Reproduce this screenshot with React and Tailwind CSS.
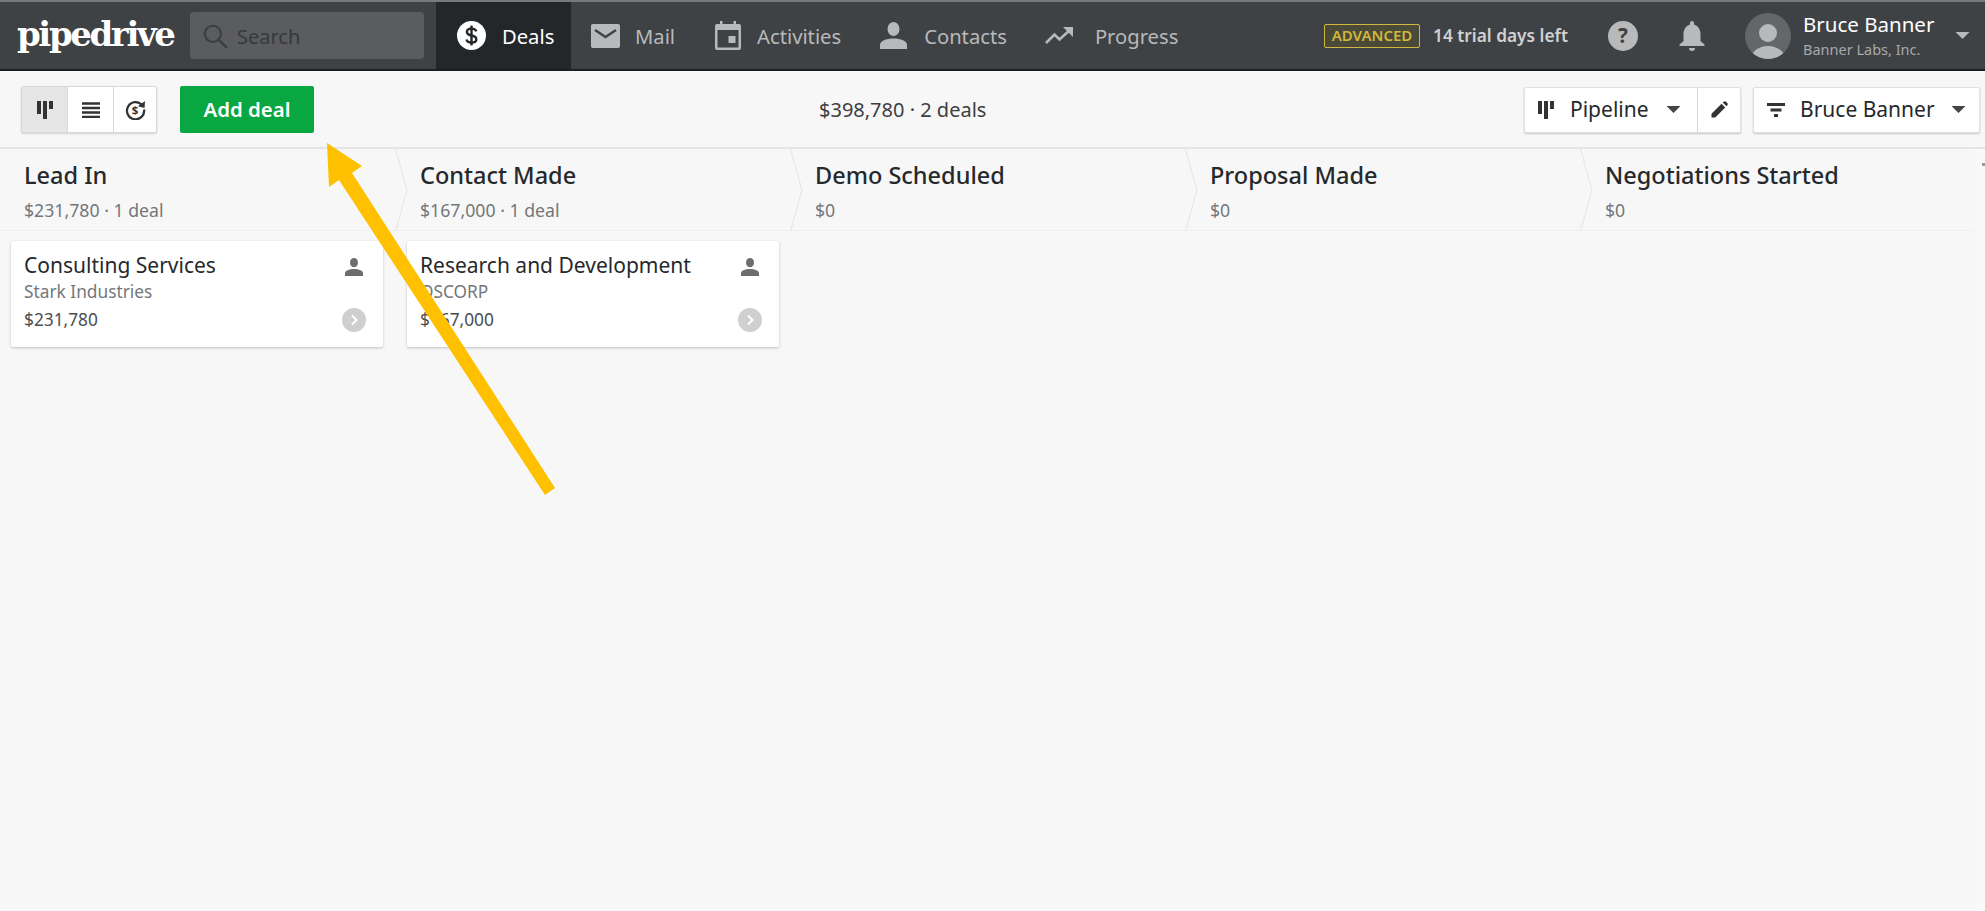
function DollarCircle({ className }) {
  return (
    <svg viewBox="0 0 24 24" className={className}>
      <circle cx="12" cy="12" r="12" fill="#fff" />
      <path d="M16 8.600c-.5-1.500-2-2.300-4-2.300-2.200 0-3.800 1.100-3.800 2.800 0 1.800 1.600 2.400 3.800 2.900 2.300.5 4 1.100 4 3 0 1.700-1.700 2.800-4 2.800-2.200 0-3.700-.9-4.200-2.500" fill="none" stroke="#23272a" strokeWidth="2" />
      <path d="M12 3.800v16.400" stroke="#23272a" strokeWidth="2" />
    </svg>
  );
}
function MailIcon({ className }) {
  return (
    <svg viewBox="0 0 29 24" className={className}>
      <rect width="29" height="24" rx="2" fill="#b8b9ba" />
      <path d="M4 6l10.500 7L25 6" fill="none" stroke="#3f4245" strokeWidth="2.400" />
    </svg>
  );
}
function CalendarIcon({ className }) {
  return (
    <svg viewBox="0 0 26 29" className={className}>
      <path d="M5 0h2.500v3h11V0H21v3h3a2 2 0 0 1 2 2v22a2 2 0 0 1-2 2H2a2 2 0 0 1-2-2V5a2 2 0 0 1 2-2h3z" fill="#b8b9ba" />
      <rect x="2.500" y="9" width="21" height="17.500" fill="#3f4245" />
      <rect x="13.500" y="15" width="7" height="7" fill="#b8b9ba" />
    </svg>
  );
}
function PersonIcon({ className, fill = "#b8b9ba" }) {
  return (
    <svg viewBox="0 0 27 27" className={className}>
      <ellipse cx="13.500" cy="7" rx="6" ry="7" fill={fill} />
      <path d="M0 27v-4c0-4 6-6.500 13.500-6.500S27 19 27 23v4z" fill={fill} />
    </svg>
  );
}
function TrendIcon({ className }) {
  return (
    <svg viewBox="0 0 28 17" className={className}>
      <path d="M1 16l8.500-8.500 5 5L26 2" fill="none" stroke="#b8b9ba" strokeWidth="2.600" />
      <path d="M18 0h10v10z" fill="#b8b9ba" />
    </svg>
  );
}
function PipelineGlyph({ className, fill = "#333" }) {
  return (
    <svg viewBox="0 0 16 18" className={className}>
      <rect x="0" y="0" width="4" height="13" fill={fill} />
      <rect x="6" y="0" width="4" height="18" fill={fill} />
      <rect x="12" y="0" width="4" height="8" fill={fill} />
    </svg>
  );
}
function Caret({ className, fill = "#444" }) {
  return (
    <svg viewBox="0 0 14 7" className={className}>
      <path d="M0 0h14L7 7z" fill={fill} />
    </svg>
  );
}
function Stage({ name, sub, children, first, last }) {
  return (
    <div className={first ? "w-[396px] shrink-0" : last ? "w-[394px] shrink-0" : "w-[395px] shrink-0"}>
      <div className="relative h-[82px] pl-6 pt-[12px] border-b border-[#f0f0f0]">
        <div className="text-[23.500px] leading-[28px] font-medium text-[#26292c] whitespace-nowrap">{name}</div>
        <div className="text-[17.700px] leading-[22px] mt-[10px] text-[#74777a]">{sub}</div>
        {!last && (
          <svg viewBox="0 0 13 82" className="absolute -right-[12px] top-0 w-[13px] h-[82px] z-10">
            <path d="M0.500 0L12 41L0.500 82" fill="#f7f7f7" stroke="#e4e4e4" strokeWidth="1" />
          </svg>
        )}
      </div>
      <div className="pl-[11px] pr-3 pt-[10px]">{children}</div>
    </div>
  );
}
function Card({ title, org, value }) {
  return (
    <div className="relative w-[372px] h-[106px] bg-white rounded-[2px] shadow-[0_1px_3px_rgba(0,0,0,0.22)] flex justify-between pl-[13px] pr-[17px] pt-[10px]">
      <div>
        <div className="text-[21px] leading-[28px] text-[#26292c] whitespace-nowrap">{title}</div>
        <div className="text-[17.300px] leading-[26px] text-[#74777a]">{org}</div>
        <div className="text-[17.300px] leading-[26px] mt-[2px] text-[#4a4d50]">{value}</div>
      </div>
      <div className="flex flex-col items-center w-[24px] pt-[7px]">
        <PersonIcon className="w-[18px] h-[18px]" fill="#6b6e71" />
        <div className="mt-[32px] w-[24px] h-[24px] rounded-full bg-[#cfcfcf] flex items-center justify-center">
          <svg viewBox="0 0 12 12" className="w-[12px] h-[12px]">
            <path d="M4 1.500L8.500 6L4 10.500" fill="none" stroke="#fff" strokeWidth="2" />
          </svg>
        </div>
      </div>
    </div>
  );
}
function NavItem({ icon, label, className }) {
  return (
    <div className={"flex items-center shrink-0 text-[#b8b9ba] text-[20.200px] h-full " + className}>
      {icon}
      <span className="mt-[2px]">{label}</span>
    </div>
  );
}

export default function App() {
  return (
    <div className="relative w-[1985px] h-[911px] overflow-hidden bg-[#f7f7f7] font-['Noto_Sans',sans-serif]">
      <header className="h-[71px] bg-[#3f4245] border-t-2 border-t-[#77797b] border-b-2 border-b-[#1b1d1f] flex items-center">
        <div className="w-[190px] pl-[17px] shrink-0 text-white text-[34px] font-bold leading-none tracking-[-2.400px] font-['DejaVu_Serif',serif] -mt-[4px]">pipedrive</div>
        <div className="w-[234px] h-[47px] shrink-0 rounded-[4px] bg-[#5a5c60] flex items-center pl-[12px] text-[#37393c] text-[20px]">
          <svg viewBox="0 0 24 24" className="w-[26px] h-[26px] mr-[9px]">
            <circle cx="10" cy="10" r="7.500" fill="none" stroke="#3c3e41" strokeWidth="2" />
            <path d="M15.500 15.500L23 23" stroke="#3c3e41" strokeWidth="2.200" />
          </svg>
          <span className="mt-[2px]">Search</span>
        </div>
        <div className="ml-3 w-[135px] h-full shrink-0 bg-[#23272a] flex items-center pl-[21px] text-white text-[20.200px]">
          <DollarCircle className="w-[29px] h-[29px] mr-[16px]" />
          <span className="mt-[2px]">Deals</span>
        </div>
        <NavItem className="ml-[20px]" label="Mail" icon={<MailIcon className="w-[29px] h-[24px] mr-[15px]" />} />
        <NavItem className="ml-[40px]" label="Activities" icon={<CalendarIcon className="w-[26px] h-[29px] mr-[16px]" />} />
        <NavItem className="ml-[39px]" label="Contacts" icon={<PersonIcon className="w-[27px] h-[27px] mr-[17px]" />} />
        <NavItem className="ml-[38px]" label="Progress" icon={<TrendIcon className="w-[28px] h-[17px] mr-[22px]" />} />
        <div className="ml-auto w-[96px] h-[24px] shrink-0 rounded-[2px] border border-[#d1b73d] bg-[#4a4a38] flex items-center justify-center text-[#d1b73d] text-[15px] font-semibold">ADVANCED</div>
        <div className="ml-[13px] w-[175px] shrink-0 text-[#d0d1d2] text-[17.300px] font-semibold whitespace-nowrap">14 trial days left</div>
        <svg viewBox="0 0 29 29" className="w-[30px] h-[30px] shrink-0">
          <circle cx="14.500" cy="14.500" r="14.500" fill="#b8b9ba" />
          <text x="14.500" y="21.500" textAnchor="middle" fontSize="20" fontWeight="700" fill="#3f4245" fontFamily="Noto Sans, sans-serif">?</text>
        </svg>
        <svg viewBox="0 0 25 30" className="ml-[41px] w-[26px] h-[30px] shrink-0">
          <path d="M12.500 0a2 2 0 0 1 2 2v1.500C19 5 21 9 21 13v7l4 3.500V25H0v-1.500L4 20v-7c0-4 2-8 6.500-9.500V2a2 2 0 0 1 2-2z" fill="#b8b9ba" />
          <path d="M9.500 27h6a3 3 0 0 1-6 0z" fill="#b8b9ba" />
        </svg>
        <svg viewBox="0 0 46 46" className="ml-[40px] w-[46px] h-[46px] shrink-0">
          <defs><clipPath id="av"><circle cx="23" cy="23" r="23" /></clipPath></defs>
          <circle cx="23" cy="23" r="23" fill="#646668" />
          <circle cx="23" cy="20" r="9" fill="#b8b9ba" />
          <ellipse cx="23" cy="46" rx="17" ry="13" fill="#b8b9ba" clipPath="url(#av)" />
        </svg>
        <div className="ml-[12px] w-[152px] shrink-0 flex flex-col -mt-[1px]">
          <div className="text-white text-[20.500px] leading-[24px] whitespace-nowrap">Bruce Banner</div>
          <div className="text-[#a8a9aa] text-[14.500px] leading-[18px] mt-[4px] whitespace-nowrap">Banner Labs, Inc.</div>
        </div>
        <Caret className="w-[15px] h-[7px] mr-[15px] shrink-0" fill="#b8b9ba" />
      </header>

      <div className="h-[78px] border-b-2 border-[#e5e5e5] flex items-center pl-[21px] pr-[5px] pt-[1px]">
        <div className="flex h-[47px] w-[136px] shrink-0 rounded-[2px] border border-[#d8d8d8] shadow-[0_1px_2px_rgba(0,0,0,0.15)] bg-white">
          <div className="w-[45px] bg-[#e6e6e6] flex items-center justify-center">
            <PipelineGlyph className="w-[16px] h-[18px]" />
          </div>
          <div className="w-[46px] border-l border-[#d8d8d8] flex items-center justify-center">
            <svg viewBox="0 0 18 16" className="w-[18px] h-[16px]">
              <path d="M0 1.500h18M0 6h18M0 10.500h18M0 15h18" stroke="#333" strokeWidth="2.600" />
            </svg>
          </div>
          <div className="flex-1 border-l border-[#d8d8d8] flex items-center justify-center">
            <svg viewBox="0 0 22 22" className="w-[21px] h-[21px]">
              <path d="M18 6.500A9 9 0 1 0 20 11" fill="none" stroke="#333" strokeWidth="2.400" />
              <path d="M21 2l-.5 7.500-7-2z" fill="#333" />
              <text x="10.500" y="15.500" textAnchor="middle" fontSize="12" fontWeight="700" fill="#333" fontFamily="Noto Sans, sans-serif">$</text>
            </svg>
          </div>
        </div>
        <div className="ml-[23px] w-[134px] h-[47px] shrink-0 rounded-[2px] bg-[#08a742] flex items-center justify-center text-white text-[20.400px] font-semibold">Add deal</div>
        <div className="ml-[505px] w-[167px] text-[20px] text-[#3c3f42] whitespace-nowrap">$398,780 · 2 deals</div>
        <div className="ml-auto flex h-[46px] w-[217px] shrink-0 rounded-[2px] bg-white border border-[#e0e0e0] shadow-[0_1px_2px_rgba(0,0,0,0.2)]">
          <div className="w-[172px] flex items-center pl-[13px] text-[21px] text-[#26292c]">
            <PipelineGlyph className="w-[16px] h-[18px] mr-[16px]" />
            <span>Pipeline</span>
            <Caret className="ml-[17px] w-[15px] h-[7px]" />
          </div>
          <div className="flex-1 border-l border-[#d8d8d8] flex items-center justify-center">
            <svg viewBox="0 0 24 24" className="w-[20px] h-[20px]">
              <path d="M3 21v-4.500L15 4.500 19.500 9 7.500 21zM16.500 3l1.500-1.200a1.500 1.500 0 0 1 2 0l2.200 2.200a1.500 1.500 0 0 1 0 2L21 7.500z" fill="#333" />
            </svg>
          </div>
        </div>
        <div className="ml-[12px] flex h-[46px] w-[227px] shrink-0 items-center pl-[13px] rounded-[2px] bg-white border border-[#e0e0e0] shadow-[0_1px_2px_rgba(0,0,0,0.2)] text-[21px] text-[#26292c]">
          <svg viewBox="0 0 18 14" className="w-[18px] h-[14px] mr-[15px]">
            <path d="M0 1.500h18M3.500 7h11M7 12.500h4" stroke="#333" strokeWidth="3" />
          </svg>
          <span>Bruce Banner</span>
          <Caret className="ml-[16px] w-[15px] h-[7px]" />
        </div>
      </div>

      <div className="flex h-[762px]">
        <div className="flex w-[1975px] shrink-0">
          <Stage first name="Lead In" sub="$231,780 · 1 deal">
            <Card title="Consulting Services" org="Stark Industries" value="$231,780" />
          </Stage>
          <Stage name="Contact Made" sub="$167,000 · 1 deal">
            <Card title="Research and Development" org="OSCORP" value="$167,000" />
          </Stage>
          <Stage name="Demo Scheduled" sub="$0" />
          <Stage name="Proposal Made" sub="$0" />
          <Stage last name="Negotiations Started" sub="$0" />
        </div>
        <div className="relative flex-1 bg-[#f9f9f9]">
          <div className="absolute right-0 top-[14px] w-[3px] h-[3px] bg-[#9a9a9a]" />
        </div>
      </div>

      <svg viewBox="0 0 1985 911" className="absolute inset-0 w-[1985px] h-[911px] pointer-events-none">
        <path d="M327 143L362 166L352 173L555 488L545 495L339 180L329 187Z" fill="#ffc000" />
      </svg>
    </div>
  );
}
